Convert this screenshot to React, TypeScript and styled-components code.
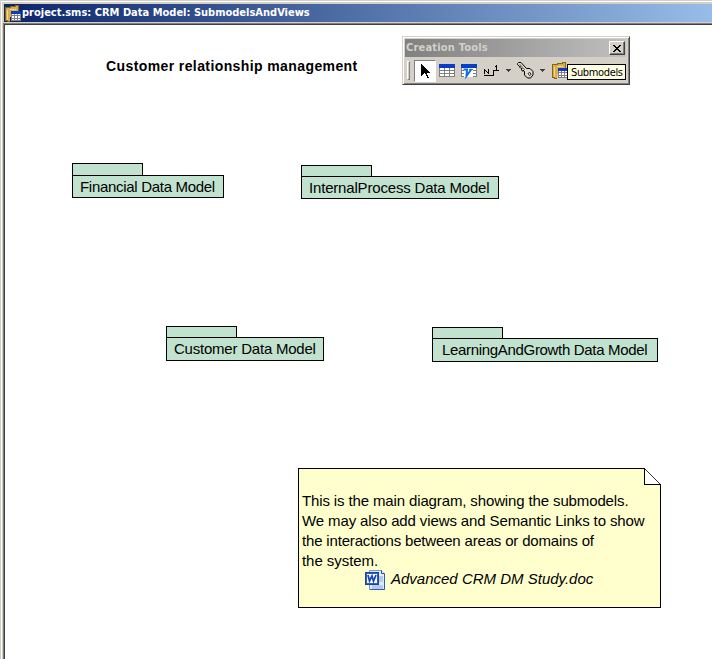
import React from "react";
import styled, { createGlobalStyle } from "styled-components";

const GlobalStyle = createGlobalStyle`
  * { box-sizing: border-box; }
  body { margin: 0; background: #d4d0c8; overflow: hidden; }
`;

const uiFont = `"DejaVu Sans Condensed", "DejaVu Sans", sans-serif`;

const Window = styled.div`
  width: 712px;
  height: 659px;
  display: flex;
  flex-direction: column;
  background: #d4d0c8;
  padding: 4px 0 0 3px;
  box-shadow: inset 1px 1px 0 #d4d0c8, inset 2px 2px 0 #fff;
  overflow: hidden;
`;

const TitleBar = styled.header`
  flex: none;
  height: 18px;
  margin-left: 1px;
  display: flex;
  align-items: center;
  background: linear-gradient(90deg, #0a246a 0%, #9dc3ec 104%);
`;

const TitleText = styled.h1`
  margin: 0 0 0 1px;
  color: #fff;
  font: bold 11px/18px ${uiFont};
  font-stretch: condensed;
  white-space: nowrap;
`;

const Canvas = styled.main`
  flex: 1;
  margin-top: 1px;
  position: relative;
  background: #fff;
  border-left: 1px solid #808080;
  border-top: 1px solid #808080;
  box-shadow: inset 1px 1px 0 #404040;
  color: #000;
  font-family: "Liberation Sans", Arial, sans-serif;
`;

const Heading = styled.h2`
  position: absolute;
  left: 102px;
  top: 33px;
  margin: 0;
  font-size: 14px;
  line-height: 18px;
  letter-spacing: 0.4px;
  white-space: nowrap;
`;

const Node = styled.section<{ $x: number; $y: number; $w: number }>`
  position: absolute;
  left: ${(p) => p.$x - 4}px;
  top: ${(p) => p.$y - 24}px;
  width: ${(p) => p.$w}px;
`;

const NodeTab = styled.div<{ $h: number }>`
  width: 71px;
  height: ${(p) => p.$h}px;
  background: #c0e2ce;
  border: 1px solid #000;
  border-bottom: 0;
`;

const NodeBody = styled.div<{ $h: number; $pad: number; $spacing: number }>`
  height: ${(p) => p.$h}px;
  background: #c0e2ce;
  border: 1px solid #000;
  padding-left: ${(p) => p.$pad}px;
  font-size: 15px;
  line-height: 22px;
  letter-spacing: ${(p) => p.$spacing}px;
  white-space: nowrap;
`;

const Note = styled.article`
  position: absolute;
  left: 294px;
  top: 444px;
  width: 363px;
  height: 140px;
  padding: 22px 0 0 3px;
  background: #ffffce;
  border: 1px solid #000;
`;

const NoteFold = styled.svg`
  position: absolute;
  right: -1px;
  top: -1px;
`;

const NoteLine = styled.p<{ $spacing: number }>`
  margin: 0;
  height: 20px;
  font-size: 15px;
  line-height: 20px;
  letter-spacing: ${(p) => p.$spacing}px;
  white-space: nowrap;
`;

const Attachment = styled.div`
  display: flex;
  align-items: flex-start;
  gap: 6px;
  height: 20px;
  margin: -1px 0 0 63px;
  font-size: 15px;
  line-height: 18px;
  font-style: italic;
  white-space: nowrap;
`;

const Palette = styled.aside`
  position: absolute;
  left: 398px;
  top: 12px;
  width: 228px;
  height: 49px;
  padding: 2px 3px 0 2px;
  background: #d4d0c8;
  border: 1px solid;
  border-color: #d4d0c8 #404040 #404040 #d4d0c8;
  box-shadow: inset 1px 1px 0 #fff, inset -1px -1px 0 #808080;
`;

const PaletteTitle = styled.div`
  height: 18px;
  display: flex;
  align-items: center;
  justify-content: space-between;
  padding: 0 1px;
  background: linear-gradient(90deg, #808080, #c0c0c0);
  color: #d4d0c8;
  font: bold 11px/18px ${uiFont};
  font-stretch: condensed;
  letter-spacing: 0.2px;
  white-space: nowrap;
`;

const CloseButton = styled.button`
  width: 16px;
  height: 14px;
  padding: 0;
  display: flex;
  align-items: center;
  justify-content: center;
  background: #d4d0c8;
  border: 1px solid;
  border-color: #fff #404040 #404040 #fff;
  box-shadow: inset -1px -1px 0 #808080;
`;

const Tools = styled.div`
  display: flex;
  align-items: center;
  height: 27px;
  padding-left: 2px;
`;

const Grip = styled.div`
  width: 3px;
  height: 19px;
  margin-right: 4px;
  border: 1px solid;
  border-color: #fff #808080 #808080 #fff;
`;

const Tool = styled.div<{ $w: number; $active?: boolean }>`
  flex: none;
  width: ${(p) => p.$w}px;
  height: 22px;
  display: flex;
  align-items: center;
  justify-content: center;
  background: ${(p) => (p.$active ? "#fff" : "transparent")};
  border: 1px solid;
  border-color: ${(p) => (p.$active ? "#808080 #fff #fff #808080" : "transparent")};
`;

const Tooltip = styled.div`
  position: absolute;
  left: 164px;
  top: 27px;
  width: 59px;
  height: 16px;
  padding-left: 3px;
  border: 1px solid #000;
  background: #ffffe1;
  color: #000;
  font: 11px/15px ${uiFont};
  font-stretch: condensed;
  letter-spacing: -0.35px;
  white-space: nowrap;
`;

const Icon = styled.svg`
  display: block;
  flex: none;
  overflow: visible;
`;

const Grid = () => (
  <>
    <rect width="16" height="13" fill="#808080" />
    <rect width="16" height="4" fill="#0a3cc8" />
    {[4, 7, 10].map((y) =>
      [1, 6, 11].map((x) => <rect key={`${x}-${y}`} x={x} y={y} width="4" height="2" fill="#fff" />)
    )}
  </>
);

const TableIcon = () => (
  <Icon width="16" height="13" shapeRendering="crispEdges">
    <Grid />
  </Icon>
);

const ViewIcon = () => (
  <Icon width="16" height="13">
    <g shapeRendering="crispEdges">
      <Grid />
      <rect x="3" y="4" width="9" height="9" fill="#fff" />
    </g>
    <path d="M2.500 5.500H6l-.5 6.500L10.500 5" fill="none" stroke="#0a70e0" strokeWidth="2" />
    <path d="M8 5.500h4" stroke="#0a70e0" />
  </Icon>
);

const FolderTableIcon = () => (
  <Icon width="17" height="17" shapeRendering="crispEdges">
    <path d="M1 2h5V1h5V0h3v12H6v4H2v-1H1z" fill="#d9ac50" />
    <path d="M1 2h5V1h5V0h3v6M1 2v13h2v1h3" fill="none" stroke="#8a6510" />
    <path d="M3 5v10M6 4h6" stroke="#f3d78b" fill="none" />
    <rect x="7" y="6" width="10" height="10" fill="#808080" />
    <rect x="7" y="6" width="10" height="3" fill="#0a3cc8" />
    {[9, 11, 14].map((y) =>
      [8, 11, 14].map((x) => <rect key={`${x}-${y}`} x={x} y={y} width="2" height={y === 11 ? 2 : 1} fill="#fff" />)
    )}
  </Icon>
);

const CursorIcon = () => (
  <Icon width="9" height="14" shapeRendering="crispEdges">
    <path d="M0 0h1v1h1v1h1v1h1v1h1v1h1v1h1v1h1v1h1v1H6v2h1v2h1v1H6v-2H5v-2H4v-1H3v1H2v1H1v1H0z" fill="#000" />
  </Icon>
);

const RelationIcon = () => (
  <Icon width="15" height="12" shapeRendering="crispEdges">
    <path d="M0 4h1v1h1v1h1v1h1V4h1v5H4V8H3V7H2V6H1v3H0z" fill="#000" />
    <path d="M0 10.500h9.500V5.500H15M12.500 0v5M11 1.500h1" fill="none" stroke="#000" />
  </Icon>
);

const DropIcon = () => (
  <Icon width="5" height="3" shapeRendering="crispEdges">
    <path d="M0 0h5v1H4v1H3v1H2V2H1V1H0z" fill="#404040" />
  </Icon>
);

const KeyIcon = () => (
  <Icon width="17" height="17">
    <path
      d="M.5 1.500l1-1H4l5.500 6h3.500l3 3v3.500l-2.500 3h-3l-3-3V9.500L6 8v1.500L4.500 8l.5-2-1 .5L2.500 5l1-1-1 .5-2-2z"
      fill="#dfdacb"
      stroke="#000"
    />
    <path d="M2.500 2l5.500 6" stroke="#77736a" />
    <path d="M11 11.500l2-1 1 2-1.500 1z" fill="#fff" stroke="#000" strokeWidth=".8" />
  </Icon>
);

const WordIcon = () => (
  <Icon width="20" height="20">
    <path d="M4.500 .5h12l3 3v16h-15z" fill="#dfeaff" stroke="#7795d0" />
    <path d="M16.500 .5v3h3" fill="#fff" stroke="#294c9c" />
    <path d="M14 7h4M14 9h4M14 11h4M7 16h11M7 18h11" stroke="#89a8df" />
    <path d="M19.500 4v15.500H5" fill="none" stroke="#315cac" />
    <rect x=".5" y="2.500" width="13" height="12" fill="#2b60c8" stroke="#1b449e" />
    <rect x="2" y="4" width="10" height="9" fill="#fff" />
    <path d="M3 5l1.500 6L7 6l1.500 5L11 5" fill="none" stroke="#174bb5" strokeWidth="1.800" />
  </Icon>
);

const nodes = [
  { name: "Financial Data Model", x: 72, y: 163, w: 152, tab: 12, body: 23, pad: 7, spacing: -0.3 },
  { name: "InternalProcess Data Model", x: 301, y: 165, w: 198, tab: 11, body: 23, pad: 7, spacing: -0.18 },
  { name: "Customer Data Model", x: 166, y: 326, w: 158, tab: 11, body: 24, pad: 7, spacing: -0.22 },
  { name: "LearningAndGrowth Data Model", x: 432, y: 327, w: 226, tab: 11, body: 24, pad: 9, spacing: -0.32 },
];

const noteLines = [
  { text: "This is the main diagram, showing the submodels.", spacing: -0.13 },
  { text: "We may also add views and Semantic Links to show", spacing: -0.12 },
  { text: "the interactions between areas or domains of", spacing: -0.17 },
  { text: "the system.", spacing: -0.05 },
];

export default function App() {
  return (
    <>
      <GlobalStyle />
      <Window>
        <TitleBar>
          <FolderTableIcon />
          <TitleText>project.sms: CRM Data Model: SubmodelsAndViews</TitleText>
        </TitleBar>
        <Canvas>
          <Heading>Customer relationship management</Heading>
          {nodes.map((n) => (
            <Node key={n.name} $x={n.x} $y={n.y} $w={n.w}>
              <NodeTab $h={n.tab} />
              <NodeBody $h={n.body} $pad={n.pad} $spacing={n.spacing}>{n.name}</NodeBody>
            </Node>
          ))}
          <Note>
            <NoteFold width="17" height="17" shapeRendering="crispEdges">
              <rect width="17" height="17" fill="#fff" />
              <path d="M.5 0v16.500H17" fill="none" stroke="#000" />
              <path d="M0 0l17 17" stroke="#000" strokeWidth=".8" />
            </NoteFold>
            {noteLines.map((l) => (
              <NoteLine key={l.text} $spacing={l.spacing}>{l.text}</NoteLine>
            ))}
            <Attachment>
              <WordIcon />
              <span>Advanced CRM DM Study.doc</span>
            </Attachment>
          </Note>
          <Palette>
            <PaletteTitle>
              <span>Creation Tools</span>
              <CloseButton aria-label="Close">
                <Icon width="8" height="7" shapeRendering="crispEdges">
                  <path d="M0 0h2v1h1v1h2V1h1V0h2v1H7v1H6v1H5v1h1v1h1v1h1v1H6V6H5V5H3v1H2v1H0V6h1V5h1V4h1V3H2V2H1V1H0z" />
                </Icon>
              </CloseButton>
            </PaletteTitle>
            <Tools>
              <Grip />
              <Tool $w={22} $active><CursorIcon /></Tool>
              <Tool $w={22}><TableIcon /></Tool>
              <Tool $w={22}><ViewIcon /></Tool>
              <Tool $w={23}><RelationIcon /></Tool>
              <Tool $w={10}><DropIcon /></Tool>
              <Tool $w={24}><KeyIcon /></Tool>
              <Tool $w={10}><DropIcon /></Tool>
              <Tool $w={24}><FolderTableIcon /></Tool>
            </Tools>
            <Tooltip>Submodels</Tooltip>
          </Palette>
        </Canvas>
      </Window>
    </>
  );
}
